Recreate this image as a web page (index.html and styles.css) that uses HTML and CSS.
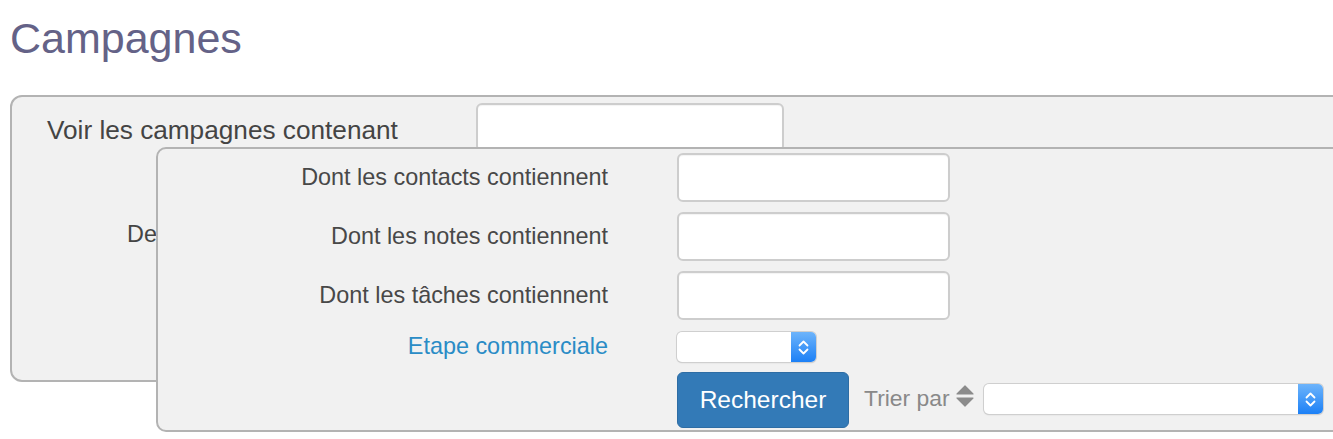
FILE: index.html
```html
<!DOCTYPE html>
<html lang="fr">
<head>
<meta charset="utf-8">
<title>Campagnes</title>
<link rel="stylesheet" href="styles.css">
</head>
<body>
<div class="page">
  <h1 class="title">Campagnes</h1>

  <form class="search-main">
    <div class="main-row">
      <label class="main-label">Voir les campagnes contenant</label>
      <input class="text-input main-input" type="text">
    </div>
    <div class="main-row second">
      <label class="main-label hidden-label">Depuis le</label>
    </div>
  </form>

  <div class="search-extra">
    <label class="extra-label">Dont les contacts contiennent</label>
    <input class="text-input extra-input" type="text">

    <label class="extra-label">Dont les notes contiennent</label>
    <input class="text-input extra-input" type="text">

    <label class="extra-label">Dont les tâches contiennent</label>
    <input class="text-input extra-input" type="text">

    <label class="extra-label link-label">Etape commerciale</label>
    <div class="mac-select small-select">
      <span class="mac-arrows">
        <svg width="25" height="30" viewBox="0 0 25 30"><polyline points="8.5,13.5 12.5,9.5 16.5,13.5" fill="none" stroke="#fff" stroke-width="1.8" stroke-linecap="round" stroke-linejoin="round"/><polyline points="8.5,17.5 12.5,21.5 16.5,17.5" fill="none" stroke="#fff" stroke-width="1.8" stroke-linecap="round" stroke-linejoin="round"/></svg>
      </span>
    </div>

    <div class="actions">
      <button class="btn-search" type="button">Rechercher</button>
      <span class="sort-label">Trier par</span>
      <svg class="sort-icon" width="18" height="22" viewBox="0 0 18 22"><path d="M9 1 L17 9 L1 9 Z" fill="#8c8c8c" stroke="#8c8c8c" stroke-width="1.2" stroke-linejoin="round"/><path d="M1 13 L17 13 L9 21 Z" fill="#8c8c8c" stroke="#8c8c8c" stroke-width="1.2" stroke-linejoin="round"/></svg>
      <div class="mac-select big-select">
        <span class="mac-arrows">
          <svg width="25" height="30" viewBox="0 0 25 30"><polyline points="8.5,13.5 12.5,9.5 16.5,13.5" fill="none" stroke="#fff" stroke-width="1.8" stroke-linecap="round" stroke-linejoin="round"/><polyline points="8.5,17.5 12.5,21.5 16.5,17.5" fill="none" stroke="#fff" stroke-width="1.8" stroke-linecap="round" stroke-linejoin="round"/></svg>
        </span>
      </div>
    </div>
  </div>
</div>
</body>
</html>
```

FILE: styles.css
```css
* { box-sizing: border-box; }

html, body {
  margin: 0;
  padding: 0;
  background: #ffffff;
}

body {
  font-family: "Liberation Sans", Arial, Helvetica, sans-serif;
  color: #474747;
}

.page {
  position: relative;
  height: 439px;
  overflow: hidden;
  padding-left: 10px;
  padding-top: 1px;
}

.title {
  margin: 13px 0 0 0;
  font-size: 43px;
  line-height: 48px;
  font-weight: normal;
  color: #646287;
}

.search-main {
  margin: 33px 0 0 0;
  width: 1400px;
  height: 287px;
  border: 2px solid #b3b3b3;
  border-radius: 12px;
  background: #f1f1f1;
  padding: 6px 0 0 35px;
}

.main-row {
  display: grid;
  grid-template-columns: 429px 308px;
  align-items: center;
  height: 49px;
}

.main-row.second {
  margin-top: 58px;
  grid-template-columns: auto;
}

.main-label {
  font-size: 26.2px;
  color: #444444;
  padding-top: 5px;
}

.hidden-label {
  font-size: 23.4px;
  padding-top: 0;
  padding-left: 80px;
}

.text-input {
  display: block;
  height: 49px;
  border: 2px solid #cdcdcd;
  border-radius: 6px;
  background: #ffffff;
  box-shadow: inset 0 1px 1px rgba(0, 0, 0, 0.05);
  font: inherit;
  padding: 0 10px;
  margin: 0;
  outline: none;
}

.main-input { width: 308px; }

.search-extra {
  position: absolute;
  left: 156px;
  top: 147px;
  width: 1300px;
  height: 285px;
  border: 2px solid #b3b3b3;
  border-radius: 10px;
  background: #f1f1f1;
  padding-top: 4px;
  display: grid;
  grid-template-columns: 450px auto;
  grid-template-rows: 49px 49px 49px 32px 56px;
  column-gap: 69px;
  row-gap: 10px;
  align-items: center;
  justify-items: start;
}

.extra-label {
  justify-self: end;
  font-size: 23.4px;
  color: #484848;
}

.link-label {
  color: #2a8cc6;
}

.extra-input { width: 273px; }

.mac-select {
  display: flex;
  justify-content: flex-end;
  height: 30px;
  border-radius: 5px;
  background: #ffffff;
  box-shadow: 0 0 0 1px #cfcfcf, 0 1px 1.5px rgba(0, 0, 0, 0.18);
}

.small-select {
  width: 139px;
  align-self: end;
}

.big-select {
  width: 339px;
  margin-left: 10px;
  margin-top: -2px;
}

.mac-arrows {
  display: block;
  width: 25px;
  height: 30px;
  border-radius: 0 5px 5px 0;
  background: linear-gradient(#6db4fb, #1c80f6);
}

.mac-arrows svg { display: block; }

.actions {
  grid-column: 2;
  display: flex;
  align-items: center;
  height: 56px;
}

.btn-search {
  width: 172px;
  height: 56px;
  border: 1px solid #2e6da4;
  border-radius: 6px;
  background: #337ab7;
  color: #ffffff;
  font-family: "Liberation Sans", Arial, Helvetica, sans-serif;
  font-size: 24.5px;
  padding: 0;
  margin: 0;
}

.sort-label {
  margin-left: 15px;
  margin-top: -3px;
  font-size: 22.9px;
  color: #898989;
}

.sort-icon {
  display: block;
  margin-left: 6px;
  margin-top: -8px;
}
```
